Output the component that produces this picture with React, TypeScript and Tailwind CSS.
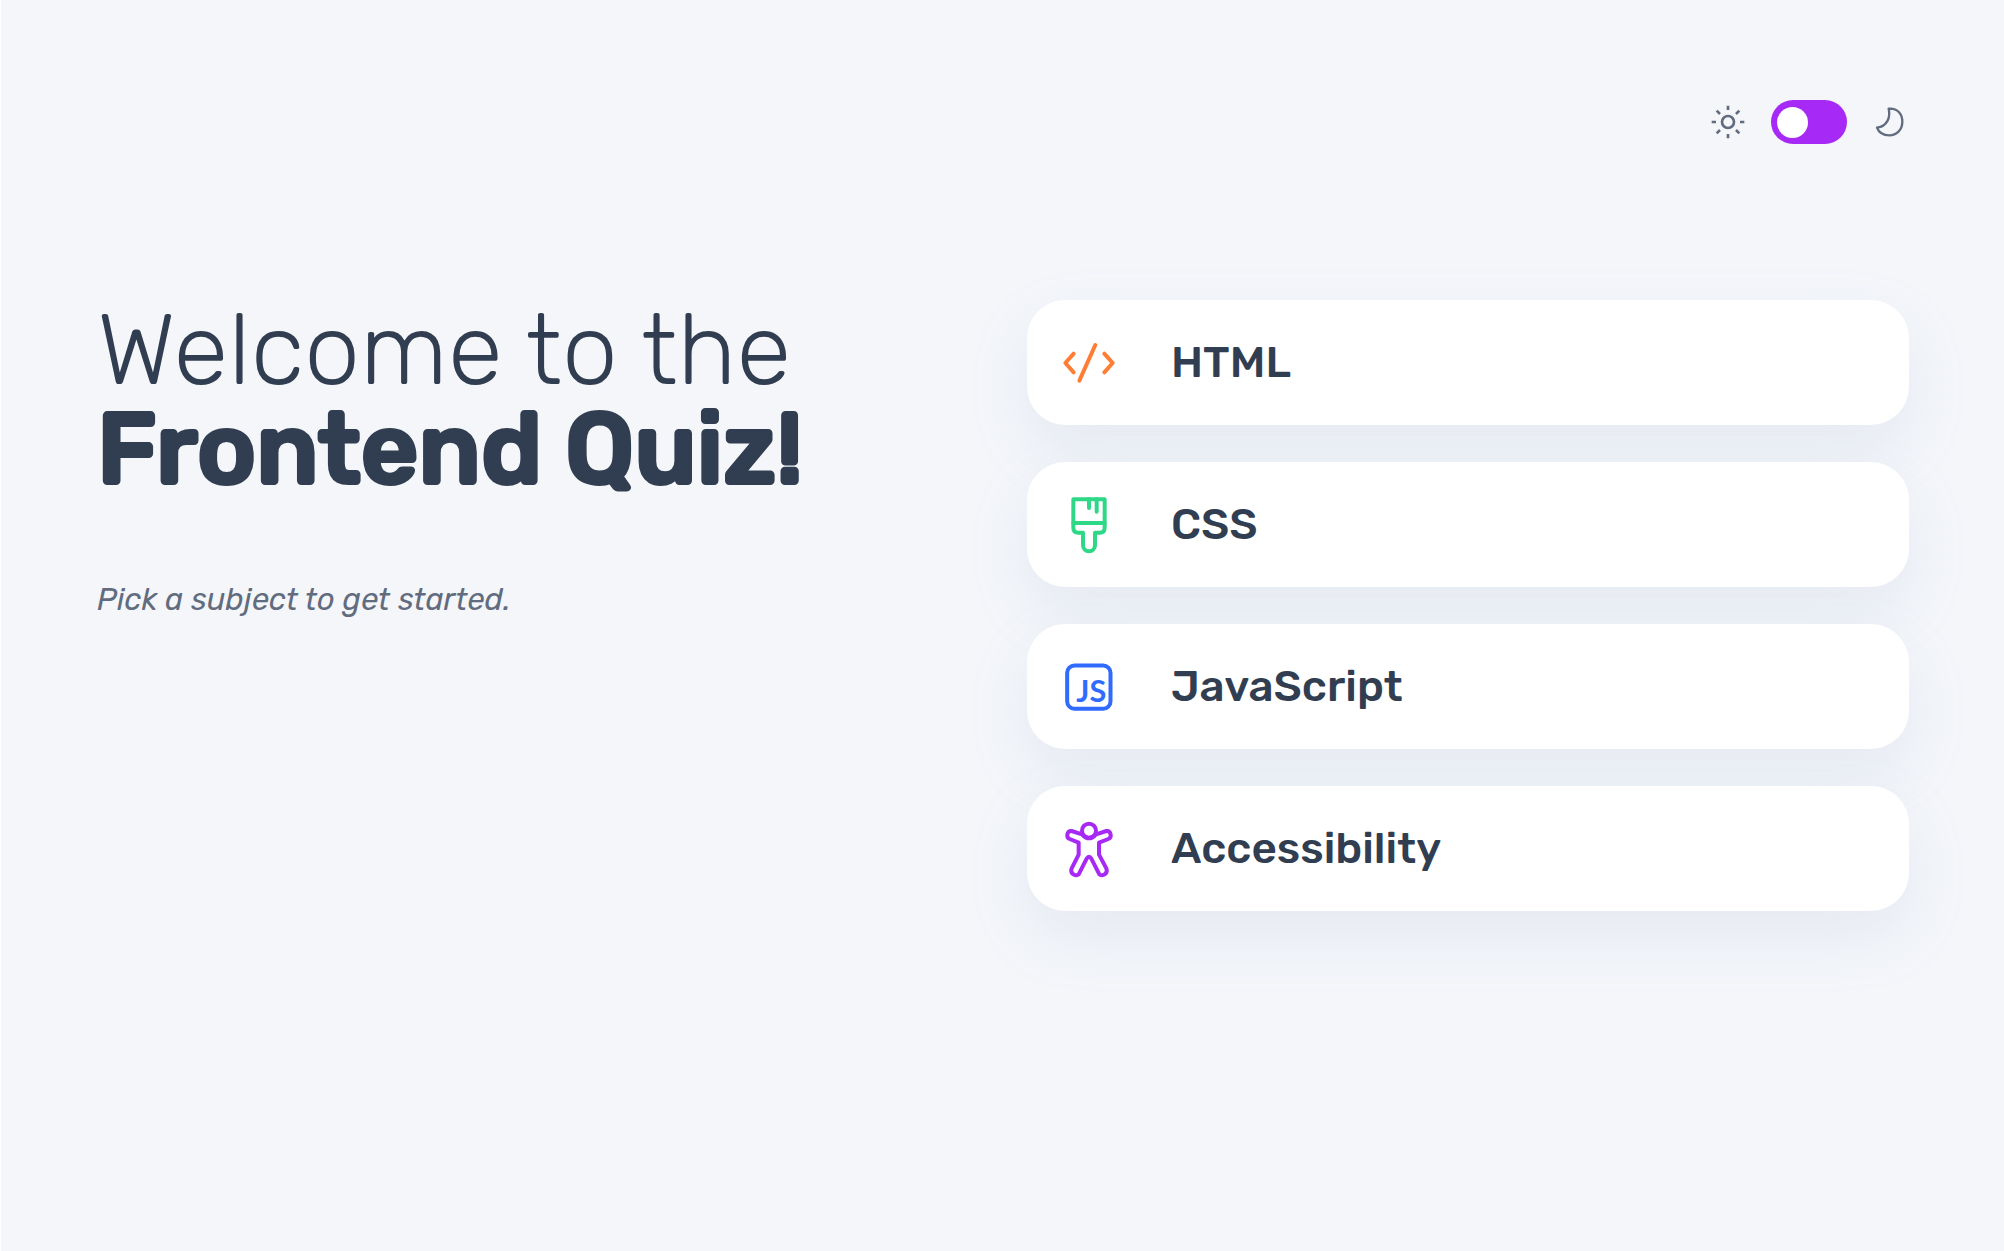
import { useState, type ReactNode } from "react";

function HtmlIcon() {
  return (
    <svg viewBox="146 125 186 186" className="size-[62px] shrink-0" fill="none" stroke="#FF7E35" strokeWidth="12" strokeLinecap="round" strokeLinejoin="round" aria-hidden="true">
      <path d="M193 190L168 218L193 246M285 190L310 218L285 246M258 164L210 271" />
    </svg>
  );
}

function CssIcon() {
  return (
    <svg viewBox="146 133 186 186" className="size-[62px] shrink-0" fill="none" stroke="#2FD887" strokeWidth="12" strokeLinecap="round" strokeLinejoin="round" aria-hidden="true">
      <path d="M192 149H286V234Q286 249 271 249H257V287A18 18 0 0 1 221 287V249H207Q192 249 192 234Z" />
      <path d="M192 220H286M239 149V175M262 149V186" />
    </svg>
  );
}

function JsIcon() {
  return (
    <svg viewBox="146 110 186 186" className="size-[62px] shrink-0" fill="none" aria-hidden="true">
      <rect x="173.500" y="138.500" width="130" height="130" rx="22" stroke="#306AFF" strokeWidth="12" />
      <text x="246" y="249" textAnchor="middle" fontSize="92" fontWeight="700" fontFamily="Lato, sans-serif" fill="#306AFF">
        JS
      </text>
    </svg>
  );
}

function AccessibilityIcon() {
  return (
    <svg viewBox="146 118 186 186" className="size-[62px] shrink-0" fill="none" stroke="#A729F5" strokeWidth="12" strokeLinecap="round" strokeLinejoin="round" aria-hidden="true">
      <circle cx="239" cy="156" r="21" />
      <path d="M218 167L187 157C173 155 169 176 181 181L208 192V228L187 269C181 285 197 294 208 287L232 240Q239 229 246 240L270 287C281 294 297 285 291 269L269 228V192L297 181C309 176 305 155 291 157L260 167Q239 191 218 167Z" />
    </svg>
  );
}

function SunIcon() {
  return (
    <svg viewBox="62 75 102 102" className="size-[34px]" fill="none" stroke="#626C7F" strokeWidth="8" aria-hidden="true">
      <circle cx="113" cy="126" r="18" />
      <path d="M113 77V90M113 162V175M64 126H77M149 126H162M79 92L89 102M137 150L147 160M147 92L137 102M89 150L79 160" />
    </svg>
  );
}

function MoonIcon() {
  return (
    <svg viewBox="549 72 108 108" className="size-9" fill="none" stroke="#626C7F" strokeWidth="7" strokeLinejoin="round" aria-hidden="true">
      <path d="M596 86C624 84 637 104 637 125C637 150 619 166 598 166C580 166 566 157 561 143C592 139 602 112 596 86Z" />
    </svg>
  );
}

const subjects: { name: string; icon: ReactNode }[] = [
  { name: "HTML", icon: <HtmlIcon /> },
  { name: "CSS", icon: <CssIcon /> },
  { name: "JavaScript", icon: <JsIcon /> },
  { name: "Accessibility", icon: <AccessibilityIcon /> },
];

export default function App() {
  const [dark, setDark] = useState(false);
  return (
    <div className="min-h-screen border-l border-white bg-[#F4F6FA] pr-[95px] pl-24 font-[Rubik,Roboto,sans-serif] text-[#313E51]">
      <header className="flex justify-end pt-[100px]">
        <label className="flex items-center gap-[26px]">
          <SunIcon />
          <input
            type="checkbox"
            role="switch"
            aria-label="Dark mode"
            checked={dark}
            onChange={(e) => setDark(e.target.checked)}
            className="flex h-11 w-[76px] cursor-pointer appearance-none items-center rounded-full bg-[#A729F5] px-[6px] before:size-[31px] before:rounded-full before:bg-white checked:justify-end"
          />
          <MoonIcon />
        </label>
      </header>
      <main className="grid grid-cols-[minmax(0,930fr)_minmax(0,882fr)] pt-[156px]">
        <section>
          <h1 className="text-[100px] leading-[99px]">
            <span className="block font-light">Welcome to the</span>
            <span className="block font-medium [-webkit-text-stroke:4px_#313E51]">Frontend Quiz!</span>
          </h1>
          <p className="mt-[78px] text-[31px] leading-[47px] text-[#626C7F] italic">Pick a subject to get started.</p>
        </section>
        <ul className="flex flex-col gap-[37px]">
          {subjects.map((s) => (
            <li key={s.name}>
              <button
                type="button"
                className="flex w-full cursor-pointer items-center gap-[51px] rounded-[38px] bg-white p-[31px] text-left text-[44px] leading-[63px] font-medium shadow-[0_25px_62px_rgba(143,160,193,0.14)]"
              >
                {s.icon}
                {s.name}
              </button>
            </li>
          ))}
        </ul>
      </main>
    </div>
  );
}
